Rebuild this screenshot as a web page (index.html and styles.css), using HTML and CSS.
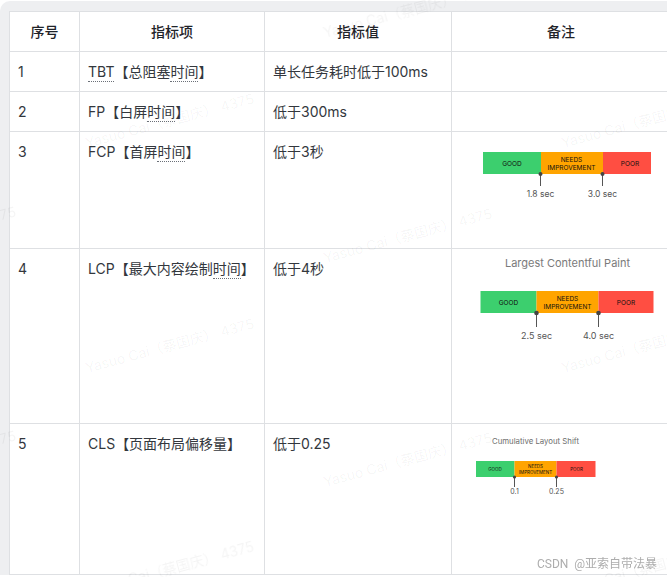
FILE: index.html
```html
<!DOCTYPE html>
<html lang="zh-CN">
<head>
<meta charset="utf-8">
<title>指标</title>
<link rel="stylesheet" href="styles.css">
</head>
<body>
<div class="page">
  <div class="panel">
    <table class="metrics">
      <colgroup><col class="c-no"><col class="c-item"><col class="c-value"><col class="c-note"></colgroup>
      <thead>
        <tr class="r-head"><th>序号</th><th>指标项</th><th>指标值</th><th>备注</th></tr>
      </thead>
      <tbody>
        <tr class="r-1"><td>1</td><td><span class="term">TBT</span>【总阻塞<span class="term">时间</span>】</td><td>单长任务耗时低于100ms</td><td></td></tr>
        <tr class="r-2"><td>2</td><td>FP【白屏<span class="term">时间</span>】</td><td>低于300ms</td><td></td></tr>
        <tr class="r-3"><td>3</td><td>FCP【首屏<span class="term">时间</span>】</td><td>低于3秒</td>
          <td class="note">
            <svg class="gauge gauge-a" viewBox="0 0 215 116">
              <rect class="good" x="31" y="20" width="58" height="22"/>
              <rect class="mid" x="89" y="20" width="62" height="22"/>
              <rect class="poor" x="151" y="20" width="48" height="22"/>
              <text class="lab" x="60" y="33.5">GOOD</text>
              <text class="lab" x="119.500" y="29.500">NEEDS</text>
              <text class="lab" x="119.500" y="37.500">IMPROVEMENT</text>
              <text class="lab" x="178" y="33.500">POOR</text>
              <path class="tick" d="M88.500 42V54M150.500 42V54"/>
              <circle class="dot" cx="88.500" cy="42" r="2"/>
              <circle class="dot" cx="150.500" cy="42" r="2"/>
              <text class="val" x="88.500" y="64.500">1.8 sec</text>
              <text class="val" x="150.500" y="64.500">3.0 sec</text>
            </svg>
          </td></tr>
        <tr class="r-4"><td>4</td><td>LCP【最大内容绘制<span class="term">时间</span>】</td><td>低于4秒</td>
          <td class="note">
            <svg class="gauge gauge-b" viewBox="0 0 215 174">
              <text class="title" x="115.500" y="18">Largest Contentful Paint</text>
              <rect class="good" x="28.500" y="42" width="56" height="22"/>
              <rect class="mid" x="84.500" y="42" width="62" height="22"/>
              <rect class="poor" x="146.500" y="42" width="55" height="22"/>
              <text class="lab" x="56.500" y="55.500">GOOD</text>
              <text class="lab" x="115.500" y="51.500">NEEDS</text>
              <text class="lab" x="115.500" y="59.500">IMPROVEMENT</text>
              <text class="lab" x="174" y="55.500">POOR</text>
              <path class="tick" d="M84.500 64V78M146.500 64V78"/>
              <circle class="dot" cx="84.500" cy="64" r="2.300"/>
              <circle class="dot" cx="146.500" cy="64" r="2.300"/>
              <text class="val val-m" x="84.500" y="90">2.5 sec</text>
              <text class="val val-m" x="146.500" y="90">4.0 sec</text>
            </svg>
          </td></tr>
        <tr class="r-5"><td>5</td><td>CLS【页面布局偏移量】</td><td>低于0.25</td>
          <td class="note">
            <svg class="gauge gauge-c" viewBox="0 0 215 150">
              <text class="title title-s" x="83.500" y="20">Cumulative Layout Shift</text>
              <rect class="good" x="24" y="37" width="38.500" height="16"/>
              <rect class="mid" x="62.500" y="37" width="42" height="16"/>
              <rect class="poor" x="104.500" y="37" width="39" height="16"/>
              <text class="lab lab-s" x="43" y="47">GOOD</text>
              <text class="lab lab-s" x="83.500" y="44">NEEDS</text>
              <text class="lab lab-s" x="83.500" y="50">IMPROVEMENT</text>
              <text class="lab lab-s" x="124.500" y="47">POOR</text>
              <path class="tick" d="M62.500 53V63M104.500 53V63"/>
              <circle class="dot" cx="62.500" cy="53" r="1.600"/>
              <circle class="dot" cx="104.500" cy="53" r="1.600"/>
              <text class="val val-s" x="62.500" y="70">0.1</text>
              <text class="val val-s" x="104.500" y="70">0.25</text>
            </svg>
          </td></tr>
      </tbody>
    </table>
  </div>
  <svg class="marks" viewBox="0 0 667 577">
    <text transform="rotate(-15 -151 261)" x="-151" y="261">Yasuo Cai（蔡国庆） 4375</text>
    <text transform="rotate(-15 -151 485)" x="-151" y="485">Yasuo Cai（蔡国庆） 4375</text>
    <text transform="rotate(-15 87 148)" x="87" y="148">Yasuo Cai（蔡国庆） 4375</text>
    <text transform="rotate(-15 87 373)" x="87" y="373">Yasuo Cai（蔡国庆） 4375</text>
    <text transform="rotate(-15 87 596)" x="87" y="596">Yasuo Cai（蔡国庆） 4375</text>
    <text transform="rotate(-15 325 38)" x="325" y="38">Yasuo Cai（蔡国庆） 4375</text>
    <text transform="rotate(-15 325 263)" x="325" y="263">Yasuo Cai（蔡国庆） 4375</text>
    <text transform="rotate(-15 325 487)" x="325" y="487">Yasuo Cai（蔡国庆） 4375</text>
    <text transform="rotate(-15 563 148)" x="563" y="148">Yasuo Cai（蔡国庆） 4375</text>
    <text transform="rotate(-15 563 373)" x="563" y="373">Yasuo Cai（蔡国庆） 4375</text>
    <text transform="rotate(-15 563 596)" x="563" y="596">Yasuo Cai（蔡国庆） 4375</text>
  </svg>
  <div class="credit">CSDN @亚索自带法暴</div>
</div>
</body>
</html>
```
FILE: styles.css
```css
html, body {
  margin: 0;
  height: 100%;
  background: #fff;
  overflow: hidden;
}
.page {
  position: relative;
  width: 667px;
  height: 577px;
  overflow: hidden;
  font-family: Inter, "Noto Sans CJK SC", sans-serif;
  color: #33373d;
  filter: blur(0.35px);
}
.panel {
  margin-top: 1px;
  height: 574px;
  padding: 10px 0 0 9px;
  box-sizing: border-box;
  background: #eeeff1;
  border-top-left-radius: 10px;
  overflow: hidden;
}
.metrics {
  table-layout: fixed;
  width: 662px;
  border-collapse: collapse;
  background: #fff;
  font-size: 14px;
  line-height: 20px;
}
.c-no { width: 70px; }
.c-item { width: 185px; }
.c-value { width: 187px; }
.metrics th, .metrics td {
  border: 1px solid #dee0e3;
  padding: 10px 8px 0;
  vertical-align: top;
  box-sizing: border-box;
}
.metrics th {
  text-align: center;
  font-weight: 500;
  color: #1f2329;
}
.r-head { height: 40px; }
.r-1, .r-2 { height: 40px; }
.r-3 { height: 117px; }
.r-4 { height: 175px; }
.r-5 { height: 151px; }
.term { border-bottom: 1px dotted #6b7078; padding-bottom: 1px; }
.metrics td.note { padding: 0; }
.gauge {
  display: block;
  width: 215px;
  font-family: Inter, sans-serif;
}
.gauge-a { height: 116px; }
.gauge-b { height: 174px; }
.gauge-c { height: 150px; }
.good { fill: #3ccf6e; }
.mid { fill: #ffa400; }
.poor { fill: #ff4e42; }
.lab { font-size: 6.500px; fill: #111; text-anchor: middle; }
.lab-s { font-size: 4.500px; }
.val { font-size: 8.500px; fill: #555; text-anchor: middle; }
.val-m { font-size: 9px; }
.val-s { font-size: 7px; }
.title { font-size: 11px; fill: #7a7a7a; text-anchor: middle; }
.title-s { font-size: 7.800px; fill: #6e6e6e; }
.tick { stroke: #555; stroke-width: 1; fill: none; }
.dot { fill: #444; }
.marks {
  position: absolute;
  inset: 0;
  width: 667px;
  height: 577px;
  pointer-events: none;
  font-family: Inter, "Noto Sans CJK SC", sans-serif;
  font-size: 14px;
  fill: rgba(0, 0, 0, 0.045);
}
.credit {
  position: absolute;
  left: 537px;
  top: 555px;
  font-family: Roboto, "Noto Sans CJK SC", sans-serif;
  font-size: 12px;
  line-height: 18px;
  word-spacing: 3px;
  color: #adadad;
  white-space: nowrap;
}
```
